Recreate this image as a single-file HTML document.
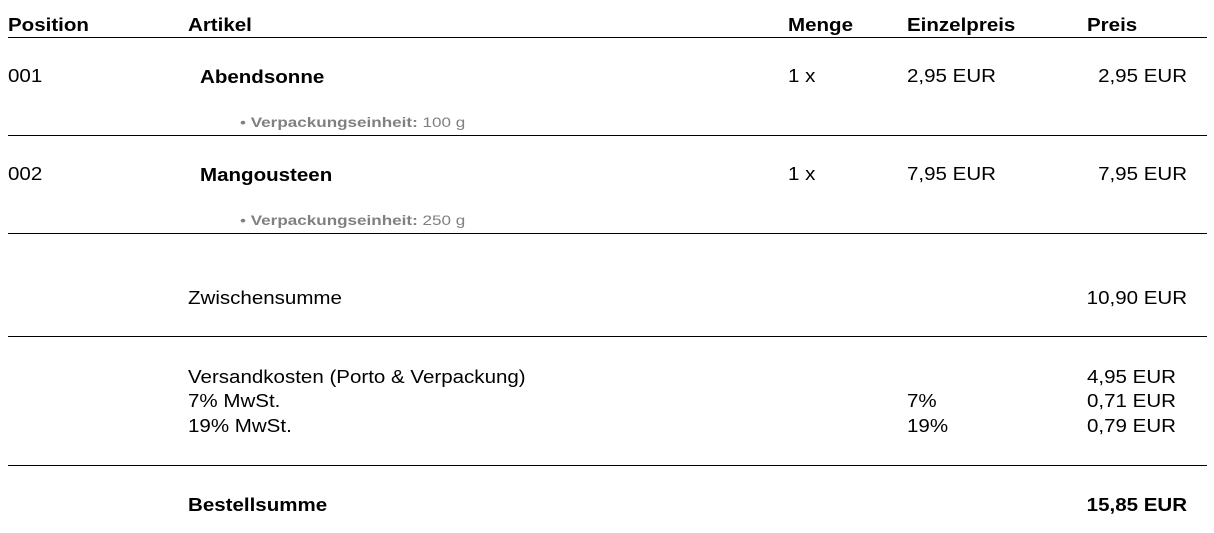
<!DOCTYPE html>
<html><head><meta charset="utf-8"><style>
body{margin:0;width:1214px;height:533px;background:#fff;font-family:"Liberation Sans",Arial,sans-serif;color:#000;position:relative;overflow:hidden}
.t{position:absolute;font-size:18px;line-height:20px;white-space:nowrap}
.t>span{display:inline-block;transform:scaleX(1.14);transform-origin:left center}
.b{font-weight:bold}
.s{font-size:14px;color:#808080}
.s>span{transform:scaleX(1.22)}
.r{text-align:right;width:200px}
.r>span{transform-origin:right center}
.l{position:absolute;left:8px;width:1199px;height:1px;background:#000}
</style></head><body>
<div class="t b" style="left:8px;top:15px"><span>Position</span></div>
<div class="t b" style="left:188px;top:15px"><span>Artikel</span></div>
<div class="t b" style="left:788px;top:15px"><span>Menge</span></div>
<div class="t b" style="left:907px;top:15px"><span>Einzelpreis</span></div>
<div class="t b" style="left:1087px;top:15px"><span>Preis</span></div>
<div class="l" style="top:37px"></div>

<div class="t" style="left:8px;top:66px"><span>001</span></div>
<div class="t b" style="left:200px;top:67px"><span>Abendsonne</span></div>
<div class="t" style="left:788px;top:66px"><span>1 x</span></div>
<div class="t" style="left:907px;top:66px"><span>2,95 EUR</span></div>
<div class="t r" style="left:987px;top:66px"><span>2,95 EUR</span></div>
<div class="t s" style="left:240px;top:112px"><span>• <b>Verpackungseinheit:</b> 100 g</span></div>
<div class="l" style="top:135px"></div>

<div class="t" style="left:8px;top:164px"><span>002</span></div>
<div class="t b" style="left:200px;top:165px"><span>Mangousteen</span></div>
<div class="t" style="left:788px;top:164px"><span>1 x</span></div>
<div class="t" style="left:907px;top:164px"><span>7,95 EUR</span></div>
<div class="t r" style="left:987px;top:164px"><span>7,95 EUR</span></div>
<div class="t s" style="left:240px;top:210px"><span>• <b>Verpackungseinheit:</b> 250 g</span></div>
<div class="l" style="top:233px"></div>

<div class="t" style="left:188px;top:288px"><span>Zwischensumme</span></div>
<div class="t r" style="left:987px;top:288px"><span>10,90 EUR</span></div>
<div class="l" style="top:336px"></div>

<div class="t" style="left:188px;top:367px"><span>Versandkosten (Porto &amp; Verpackung)</span></div>
<div class="t" style="left:1087px;top:367px"><span>4,95 EUR</span></div>
<div class="t" style="left:188px;top:391px"><span>7% MwSt.</span></div>
<div class="t" style="left:907px;top:391px"><span>7%</span></div>
<div class="t" style="left:1087px;top:391px"><span>0,71 EUR</span></div>
<div class="t" style="left:188px;top:416px"><span>19% MwSt.</span></div>
<div class="t" style="left:907px;top:416px"><span>19%</span></div>
<div class="t" style="left:1087px;top:416px"><span>0,79 EUR</span></div>
<div class="l" style="top:465px"></div>

<div class="t b" style="left:188px;top:495px"><span>Bestellsumme</span></div>
<div class="t b r" style="left:987px;top:495px"><span>15,85 EUR</span></div>
</body></html>
